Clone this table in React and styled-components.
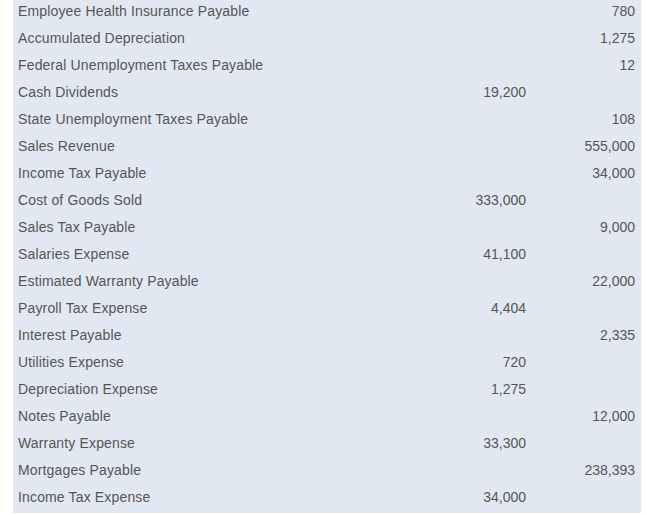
import React from 'react';
import styled, { createGlobalStyle } from 'styled-components';

const GlobalStyle = createGlobalStyle`
  body {
    margin: 0;
    background: #fff;
    font-family: Arial, "Liberation Sans", sans-serif;
  }
`;

const Panel = styled.div`
  margin: -3px 0 0 13px;
  padding-bottom: 3px;
  width: 628px;
  background: #e2e8f2;
`;

const Row = styled.div`
  display: grid;
  grid-template-columns: 1fr 112px 109px;
  height: 27px;
  align-items: center;
  font-size: 14px;
  color: #555;
`;

const Name = styled.div`
  padding-left: 5px;
  white-space: nowrap;
  letter-spacing: 0.15px;
`;

const Amount = styled.div`
  text-align: right;
  padding-right: 6px;
`;

const accounts = [
  ['Employee Health Insurance Payable', '', '780'],
  ['Accumulated Depreciation', '', '1,275'],
  ['Federal Unemployment Taxes Payable', '', '12'],
  ['Cash Dividends', '19,200', ''],
  ['State Unemployment Taxes Payable', '', '108'],
  ['Sales Revenue', '', '555,000'],
  ['Income Tax Payable', '', '34,000'],
  ['Cost of Goods Sold', '333,000', ''],
  ['Sales Tax Payable', '', '9,000'],
  ['Salaries Expense', '41,100', ''],
  ['Estimated Warranty Payable', '', '22,000'],
  ['Payroll Tax Expense', '4,404', ''],
  ['Interest Payable', '', '2,335'],
  ['Utilities Expense', '720', ''],
  ['Depreciation Expense', '1,275', ''],
  ['Notes Payable', '', '12,000'],
  ['Warranty Expense', '33,300', ''],
  ['Mortgages Payable', '', '238,393'],
  ['Income Tax Expense', '34,000', ''],
];

export default function App() {
  return (
    <>
      <GlobalStyle />
      <Panel>
        {accounts.map(([name, debit, credit]) => (
          <Row key={name}>
            <Name>{name}</Name>
            <Amount>{debit}</Amount>
            <Amount>{credit}</Amount>
          </Row>
        ))}
      </Panel>
    </>
  );
}
